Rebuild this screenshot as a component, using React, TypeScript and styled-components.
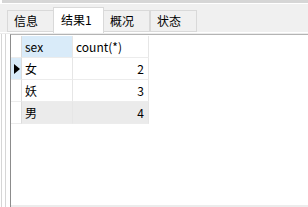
import React from 'react'
import styled, { createGlobalStyle } from 'styled-components'

const Global = createGlobalStyle`
  html, body { margin: 0; padding: 0; background: #fff; }
  body { font-family: "Noto Sans CJK SC", "Noto Sans", sans-serif; }
`

const Page = styled.div`
  width: 308px;
  height: 207px;
  background: #fff;
  display: flex;
  flex-direction: column;
  overflow: hidden;
`

const TopBand = styled.div`
  height: 3px;
  background: #d6d6d6;
  margin-left: 2px;
`

const TabBar = styled.div`
  height: 28px;
  border-top: 1px solid #fff;
  border-bottom: 1px solid #fff;
  background: #f0f0f0;
  display: flex;
  align-items: flex-end;
  padding-left: 7px;
`

const Tab = styled.div<{ active?: boolean }>`
  box-sizing: border-box;
  height: ${p => (p.active ? 26 : 22)}px;
  width: ${p => (p.active ? 51 : 47)}px;
  margin-bottom: ${p => (p.active ? -1 : 0)}px;
  margin-left: ${p => (p.active ? -1 : 0)}px;
  margin-right: ${p => (p.active ? -1 : 0)}px;
  position: relative;
  z-index: ${p => (p.active ? 1 : 0)};
  background: ${p => (p.active ? '#fff' : '#f0f0f0')};
  border: 1px solid #d9d9d9;
  border-bottom: ${p => (p.active ? 'none' : '1px solid #d9d9d9')};
  font-size: 12px;
  line-height: 20px;
  color: #000;
  padding-left: ${p => (p.active ? 7 : 6)}px;
  padding-top: ${p => (p.active ? 2 : 0)}px;
`

const Body = styled.div`
  flex: 1;
  display: flex;
  border-top: 1px solid #ececec;
`

const Rails = styled.div`
  width: 9px;
  display: flex;
  gap: 3px;
  padding-left: 1px;
`

const Rail = styled.div`
  width: 1px;
  background: #d6d6d6;
`

const Content = styled.div`
  flex: 1;
  border-left: 1px solid #8c8c8c;
  border-top: 1px solid #b4b4b4;
  display: flex;
  flex-direction: column;
`

const GridArea = styled.div`
  flex: 1;
  padding-top: 1px;
`

const BottomStrip = styled.div`
  height: 2px;
  background: #ececec;
`

const Grid = styled.div`
  display: grid;
  grid-template-columns: 11px 51px 76px;
  width: 138px;
`

const Cell = styled.div<{ bg?: string; right?: boolean; head?: boolean }>`
  box-sizing: border-box;
  height: ${p => (p.head ? 22 : 22)}px;
  background: ${p => p.bg || '#fff'};
  border-right: 1px solid #e6e6e6;
  border-bottom: 1px solid #ececec;
  font-size: 12px;
  line-height: 21px;
  color: #000;
  padding: 0 4px 0 3px;
  text-align: ${p => (p.right ? 'right' : 'left')};
  white-space: nowrap;
  overflow: hidden;
`

const Indicator = styled.div<{ bg?: string; head?: boolean }>`
  box-sizing: border-box;
  height: 22px;
  background: ${p => p.bg || '#fff'};
  border-right: 1px solid #dcdcdc;
  border-bottom: 1px solid #ececec;
  display: flex;
  align-items: center;
  justify-content: center;
`

const Arrow = styled.div`
  width: 0;
  height: 0;
  border-top: 5px solid transparent;
  border-bottom: 5px solid transparent;
  border-left: 6px solid #000;
  margin-left: 1px;
`

const rows = [
  { sex: '女', count: 2, current: true },
  { sex: '妖', count: 3 },
  { sex: '男', count: 4, shaded: true },
]

export default function App() {
  return (
    <Page>
      <Global />
      <TopBand />
      <TabBar>
        <Tab>信息</Tab>
        <Tab active>结果1</Tab>
        <Tab>概况</Tab>
        <Tab>状态</Tab>
      </TabBar>
      <Body>
        <Rails>
          <Rail />
          <Rail />
        </Rails>
        <Content>
          <GridArea>
            <Grid>
              <Indicator head />
              <Cell head bg="#d9ebf9">sex</Cell>
              <Cell head>count(*)</Cell>
              {rows.map(r => (
                <React.Fragment key={r.sex}>
                  <Indicator bg={r.current ? '#d9ebf9' : '#fff'}>
                    {r.current && <Arrow />}
                  </Indicator>
                  <Cell bg={r.shaded ? '#ebebeb' : '#fff'}>{r.sex}</Cell>
                  <Cell right bg={r.shaded ? '#ebebeb' : '#fff'}>{r.count}</Cell>
                </React.Fragment>
              ))}
            </Grid>
          </GridArea>
          <BottomStrip />
        </Content>
      </Body>
    </Page>
  )
}
